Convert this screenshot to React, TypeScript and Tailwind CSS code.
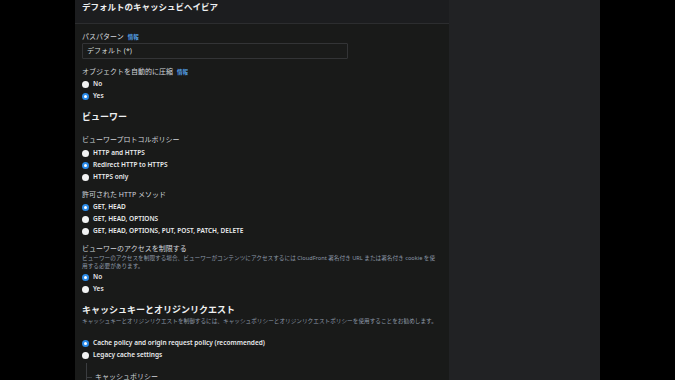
import React from "react";

const font = { fontFamily: '"Noto Sans", "Noto Sans CJK JP", sans-serif' };

function Radio({ checked, label, className = "" }: { checked?: boolean; label: string; className?: string }) {
  return (
    <div className={`flex h-[12px] items-center ${className}`}>
      {checked ? (
        <span className="flex h-[7px] w-[7px] items-center justify-center rounded-full bg-[#2a8ae8]">
          <span className="h-[3px] w-[3px] rounded-full bg-white" />
        </span>
      ) : (
        <span className="h-[7px] w-[7px] rounded-full bg-[#f2f3f3]" />
      )}
      <span className="ml-[4px] text-[6.5px] font-semibold leading-[12px] text-[#e9ebed]">{label}</span>
    </div>
  );
}

function Label({ text, info, className = "" }: { text: string; info?: boolean; className?: string }) {
  return (
    <div className={`flex h-[10px] items-center ${className}`}>
      <span className="text-[7px] leading-[10px] text-[#d1d5db]">{text}</span>
      {info && <span className="ml-[4px] text-[5.5px] font-bold leading-[10px] text-[#539fe5]">情報</span>}
    </div>
  );
}

export default function App() {
  return (
    <div className="flex h-[380px] w-[675px] overflow-hidden bg-black" style={font}>
      <div className="w-[75px] shrink-0 bg-black" />
      <div className="w-[374px] shrink-0 bg-[#191a19]">
        <div className="h-[24px] border-b border-[#2c2d2f] bg-[#1c1d1f] px-[7px]">
          <div className="text-[8.5px] font-bold leading-[14px] text-[#eef0f1]">デフォルトのキャッシュビヘイビア</div>
        </div>
        <div className="px-[7px]">
          <Label text="パスパターン" info className="mt-[8px]" />
          <div className="mt-[1px] flex h-[16px] w-[266px] items-center rounded-[1px] border border-[#333436] bg-[#1a1b1a] px-[4px]">
            <span className="text-[7px] text-[#d5dbdb]">デフォルト (*)</span>
          </div>
          <Label text="オブジェクトを自動的に圧縮" info className="mt-[8px]" />
          <Radio label="No" className="mt-[1px]" />
          <Radio label="Yes" checked />

          <div className="mt-[9px] h-[12px] text-[9px] font-bold leading-[12px] text-[#eef0f1]">ビューワー</div>

          <Label text="ビューワープロトコルポリシー" className="mt-[12px]" />
          <Radio label="HTTP and HTTPS" className="mt-[2px]" />
          <Radio label="Redirect HTTP to HTTPS" checked />
          <Radio label="HTTPS only" />

          <Label text="許可された HTTP メソッド" className="mt-[7px]" />
          <Radio label="GET, HEAD" checked className="mt-[1px]" />
          <Radio label="GET, HEAD, OPTIONS" />
          <Radio label="GET, HEAD, OPTIONS, PUT, POST, PATCH, DELETE" />

          <Label text="ビューワーのアクセスを制限する" className="mt-[7px]" />
          <div className="w-[356px] text-[5.65px] leading-[8px] text-[#8d99a8]">
            ビューワーのアクセスを制限する場合、ビューワーがコンテンツにアクセスするには CloudFront 署名付き URL または署名付き cookie を使用する必要があります。
          </div>
          <Radio label="No" checked className="mt-[1px]" />
          <Radio label="Yes" />

          <div className="mt-[9px] h-[12px] text-[9px] font-bold leading-[12px] text-[#eef0f1]">キャッシュキーとオリジンリクエスト</div>
          <div className="mt-[1px] h-[8px] text-[5.65px] leading-[8px] text-[#8d99a8]">
            キャッシュキーとオリジンリクエストを制御するには、キャッシュポリシーとオリジンリクエストポリシーを使用することをお勧めします。
          </div>

          <Radio label="Cache policy and origin request policy (recommended)" checked className="mt-[12px]" />
          <Radio label="Legacy cache settings" />

          <div className="ml-[4px] mt-[2px] h-[30px] border-l border-[#3b3d40]">
            <div className="flex items-center pt-[9px]">
              <span className="h-px w-[5px] bg-[#3b3d40]" />
              <span className="ml-[3px] text-[7px] leading-[10px] text-[#d1d5db]">キャッシュポリシー</span>
            </div>
          </div>
        </div>
      </div>
      <div className="w-[151px] shrink-0 bg-[#212224]" />
      <div className="w-[75px] shrink-0 bg-black" />
    </div>
  );
}
